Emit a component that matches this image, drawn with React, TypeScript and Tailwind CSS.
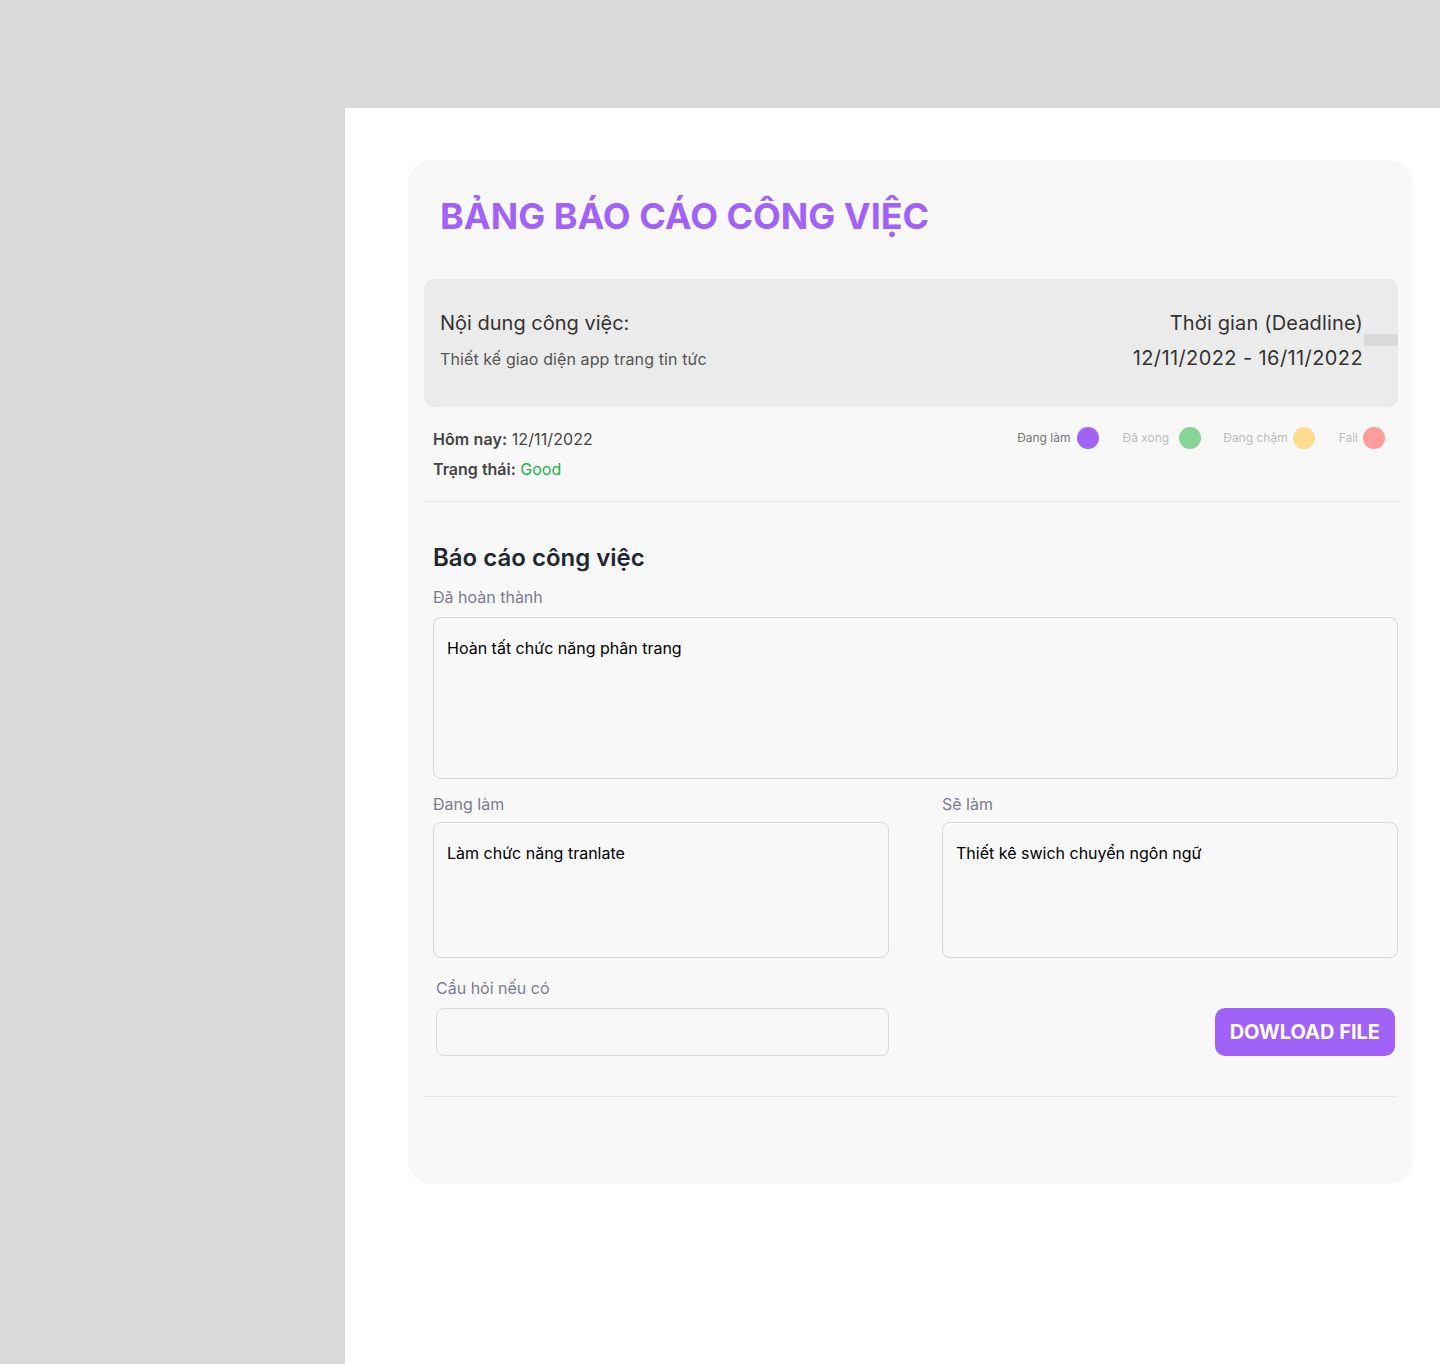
export default function App() {
  const legend = [
    { label: 'Đang làm', text: 'text-[#777777]', dot: 'bg-[#a162f7]', gap: 'gap-[6px]', ml: 'ml-0' },
    { label: 'Đã xong', text: 'text-[#bdbdbd]', dot: 'bg-[#88d498]', gap: 'gap-[10px]', ml: 'ml-[24px]' },
    { label: 'Đang chậm', text: 'text-[#bdbdbd]', dot: 'bg-[#fcdd8f]', gap: 'gap-[5px]', ml: 'ml-[22px]' },
    { label: 'Fail', text: 'text-[#bdbdbd]', dot: 'bg-[#ff9b9b]', gap: 'gap-[5px]', ml: 'ml-[24px]' },
  ]

  return (
    <div className="min-h-[1364px] bg-[#d9d9d9] pt-[108px] pl-[345px] font-['Inter',sans-serif]">
      <div className="bg-white min-h-[1256px] pt-[52px] pl-[63px] pr-[27px]">
        {/* Card */}
        <div className="bg-[#f8f8f8] rounded-[24px] h-[1024px] pl-4 pr-[15px] pt-[34px]">
          <h1 className="pl-4 text-[36px] leading-[44px] font-bold text-[#a162f7]">
            BẢNG BÁO CÁO CÔNG VIỆC
          </h1>

          {/* Task info */}
          <div className="relative mt-[41px] h-[128px] bg-[#ebebeb] rounded-[10px] px-4 pt-[30px] flex justify-between">
            <div>
              <p className="text-[20px] leading-[28px] text-[#333333]">Nội dung công việc:</p>
              <p className="mt-[12px] text-[16px] leading-[20px] tracking-[0.1px] text-[#555555]">Thiết kế giao diện app trang tin tức</p>
            </div>
            <div className="text-right pr-[19px] text-[20px] leading-[28px] text-[#333333]">
              <p className="tracking-[0.15px]">Thời gian (Deadline)</p>
              <p className="mt-[7px] tracking-[0.4px]">12/11/2022 - 16/11/2022</p>
            </div>
            <div className="absolute right-0 top-[55px] w-[34px] h-[12px] bg-[#d9d9d9]" />
          </div>

          {/* Status row */}
          <div className="flex justify-between px-[9px] pt-[17px] pb-[17px] border-b border-[#e5e5e5]">
            <div className="text-[16px] leading-[30px] text-[#444444]">
              <p className="tracking-[0.1px]"><span className="font-semibold">Hôm nay:</span> 12/11/2022</p>
              <p><span className="font-semibold">Trạng thái:</span> <span className="text-[#22b14c]">Good</span></p>
            </div>
            <div className="flex pt-[3px] pr-[4px] h-fit">
              {legend.map((l) => (
                <div key={l.label} className={`flex items-center ${l.gap} ${l.ml}`}>
                  <span className={`text-[12px] ${l.text}`}>{l.label}</span>
                  <span className={`w-[22px] h-[22px] rounded-full ${l.dot}`} />
                </div>
              ))}
            </div>
          </div>

          {/* Report */}
          <div className="pl-[9px] pt-[40px] pb-[40px] border-b border-[#e5e5e5]">
            <h2 className="text-[24px] leading-[32px] font-semibold text-[#23262f]">Báo cáo công việc</h2>
            <p className="mt-[13px] text-[16px] leading-[20px] text-[#7c7c8d]">Đã hoàn thành</p>
            <div className="mt-[10px] h-[162px] border border-[#d9d9d9] rounded-[8px] px-[13px] pt-[20px] text-[16px] leading-[20px] text-black">
              Hoàn tất chức năng phân trang
            </div>

            <div className="mt-[15px] grid grid-cols-2 gap-[53px]">
              <div>
                <p className="text-[16px] leading-[20px] text-[#7c7c8d]">Đang làm</p>
                <div className="mt-[8px] h-[136px] border border-[#d9d9d9] rounded-[8px] px-[13px] pt-[20px] text-[16px] leading-[20px] text-black">
                  Làm chức năng tranlate
                </div>
              </div>
              <div>
                <p className="text-[16px] leading-[20px] text-[#7c7c8d]">Sẽ làm</p>
                <div className="mt-[8px] h-[136px] border border-[#d9d9d9] rounded-[8px] px-[13px] pt-[20px] text-[16px] leading-[20px] text-black">
                  Thiết kê swich chuyển ngôn ngữ
                </div>
              </div>
            </div>

            <div className="mt-[20px] grid grid-cols-2 gap-[53px]">
              <div className="pl-[3px]">
                <p className="text-[16px] leading-[20px] text-[#7c7c8d]">Cầu hỏi nếu có</p>
                <div className="mt-[10px] h-[48px] border border-[#d9d9d9] rounded-[8px]" />
              </div>
              <div className="flex justify-end items-end pr-[3px]">
                <button className="h-[48px] px-[15px] rounded-[10px] bg-[#a162f7] text-white text-[20px] font-bold">
                  DOWLOAD FILE
                </button>
              </div>
            </div>
          </div>
        </div>
      </div>
    </div>
  )
}
